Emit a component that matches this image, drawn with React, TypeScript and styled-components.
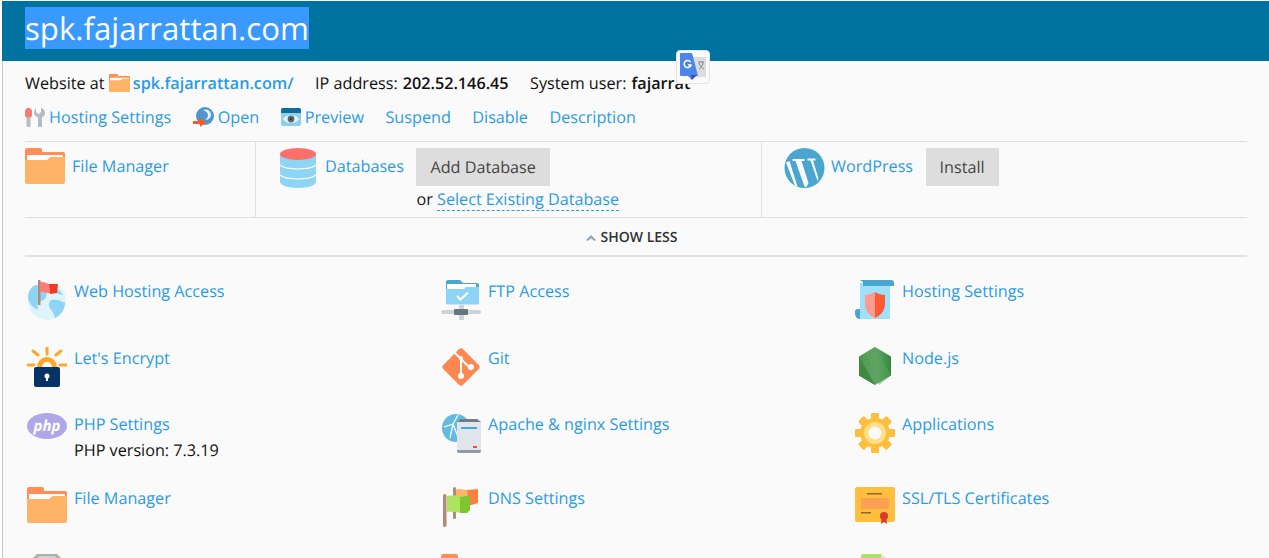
import React from "react";
import styled, { createGlobalStyle } from "styled-components";

const GlobalStyle = createGlobalStyle`
  html, body {
    margin: 0;
    height: 558px;
    overflow: hidden;
    background: #ffffff;
    font-family: "Open Sans", "Noto Sans", sans-serif;
    font-size: 16.2px;
    line-height: 22px;
    color: #111111;
    text-rendering: geometricPrecision;
  }
`;

const Page = styled.div`
  position: relative;
  margin: 1px 0 0 2px;
`;

const Header = styled.header`
  height: 60px;
  background: #0072a0;
  padding: 6px 0 0 23px;
  box-sizing: border-box;
`;

const Title = styled.h1`
  margin: 0;
  font-size: 31.2px;
  font-weight: 400;
  line-height: 40px;
  color: #ffffff;

  span {
    background: #3a99fc;
    display: inline-block;
    padding-top: 2px;
  }
`;

const Body = styled.main`
  border-left: 1px solid #c8c8c8;
  background: #fafafa;
  padding: 11px 22px 0 22px;
  height: 500px;
  overflow: hidden;
`;

const InfoBar = styled.div`
  display: flex;
  height: 22px;
  white-space: nowrap;
`;

const InfoItem = styled.div`
  display: flex;
  align-items: center;
  margin-right: 21.5px;

  b {
    font-weight: 600;
    margin-left: 5px;
  }
`;

const SiteLink = styled.a`
  color: #2a9be6;
  font-weight: 600;
  margin-left: 3px;
`;

const Actions = styled.nav`
  display: flex;
  align-items: center;
  height: 22px;
  margin-top: 12px;
  white-space: nowrap;
`;

const Action = styled.a`
  display: flex;
  align-items: center;
  gap: 4px;
  margin-right: 21.5px;
  color: #2a9be6;
`;

const Tools = styled.section`
  display: flex;
  height: 77px;
  margin-top: 13px;
  border-top: 1px solid #e0e0e0;
  border-bottom: 1px solid #e0e0e0;
  box-sizing: border-box;
`;

const ToolCell = styled.div<{ $width: number; $indent: number }>`
  display: flex;
  flex: 0 0 ${({ $width }) => $width}px;
  box-sizing: border-box;
  padding: 6px 0 0 ${({ $indent }) => $indent}px;
  border-right: 1px solid #e0e0e0;

  &:last-child {
    border-right: 0;
  }
`;

const ToolLink = styled.a<{ $gap?: number }>`
  color: #2a9be6;
  margin: 7px 0 0 ${({ $gap }) => $gap ?? 7}px;
  height: 22px;
`;

const ToolActions = styled.div`
  margin-left: 12.5px;
`;

const ToolButton = styled.div`
  display: inline-block;
  padding: 0 14px;
  height: 38px;
  line-height: 38px;
  background: #dddddd;
  color: #444444;
`;

const OrLine = styled.div`
  margin-top: 2px;
  height: 22px;
`;

const DashedLink = styled.a`
  color: #2a9be6;
  border-bottom: 1px dashed #2a9be6;
`;

const ShowLess = styled.div`
  display: flex;
  justify-content: center;
  align-items: center;
  gap: 4px;
  height: 39px;
  padding: 2px 10px 0 0;
  box-sizing: border-box;
  border-bottom: 2px solid #e3e3e3;
  font-size: 14px;
  font-weight: 600;
  color: #333333;
`;

const Chevron = styled.svg`
  width: 12px;
  height: 8px;
`;

const ServiceGrid = styled.section`
  display: grid;
  grid-template-columns: repeat(3, 414px);
  margin-top: 23px;
  padding-left: 2px;
`;

const Service = styled.div<{ $tall?: boolean }>`
  display: flex;
  gap: 7px;
  height: ${({ $tall }) => ($tall ? 74 : 66.5)}px;
`;

const IconBox = styled.div`
  flex: 0 0 40px;
  height: 40px;
  display: flex;
  justify-content: center;
`;

const ServiceText = styled.div`
  color: #111111;

  a {
    display: block;
    color: #2a9be6;
  }
`;

const ServiceNote = styled.div`
  margin-top: 4px;
`;

const TranslateBadge = styled.div`
  position: absolute;
  left: 674px;
  top: 49px;
  width: 34px;
  height: 34px;
  box-sizing: border-box;
  display: flex;
  align-items: center;
  justify-content: center;
  background: #fafafa;
  border: 1px solid #e4e4e4;
  border-radius: 4px;
`;

const Folder = ({ size = 40 }: { size?: number }) => (
  <svg width={size} height={size * 0.9} viewBox="0 0 40 36">
    <path d="M0 2a2 2 0 0 1 2-2h13a2 2 0 0 1 2 2v2h21a2 2 0 0 1 2 2v10H0z" fill="#ff8d58" />
    <path d="M2 8a1 1 0 0 1 1-1h34a1 1 0 0 1 1 1v8H2z" fill="#ffffff" />
    <path d="M0 12h21a3 3 0 0 0 3-2 3 3 0 0 1 3-1h13v25a2 2 0 0 1-2 2H2a2 2 0 0 1-2-2z" fill="#ffb366" />
  </svg>
);

const Tools2 = () => (
  <svg width="20" height="19" viewBox="0 0 20 19">
    <rect x="0" y="0" width="7" height="10" rx="3.5" fill="#f47a72" />
    <rect x="1.500" y="9" width="4" height="10" rx="1.500" fill="#b5bcc2" />
    <path d="M11 0v4l2.500 2L16 4V0c3 .5 4 3 4 5s-1.500 4-3 4.500V17.500a1.500 1.500 0 0 1-4 0V9.500C11 9 9 7 9 5s1-4.500 2-5z" fill="#b5bcc2" />
  </svg>
);

const OpenIcon = () => (
  <svg width="21" height="20" viewBox="0 0 21 20">
    <circle cx="12" cy="9" r="9" fill="#4f97c9" />
    <path d="M10 3c4-1.500 7 0 8 4 .5 3-2 6-6 6 1-1 3-2 3-5 0-2-2-4-5-5z" fill="#e6f3fa" />
    <path d="M0 14h7v-3.500l6 5-6 4.500v-3H0z" fill="#ff5a1f" />
  </svg>
);

const PreviewIcon = () => (
  <svg width="20" height="18" viewBox="0 0 20 18">
    <rect width="20" height="18" rx="2" fill="#8ed0ea" />
    <path d="M0 5V2a2 2 0 0 1 2-2h16a2 2 0 0 1 2 2v3z" fill="#0f6c9c" />
    <path d="M2 11c2-3 5-4 8-4s6 1 8 4c-2 3-5 4-8 4s-6-1-8-4z" fill="#e8f1f4" />
    <circle cx="10" cy="11" r="3.400" fill="#5a6b74" />
    <circle cx="10" cy="11" r="1.300" fill="#2f3d45" />
  </svg>
);

const DatabaseIcon = () => (
  <svg width="36" height="40" viewBox="0 0 36 40">
    <path d="M0 6h36v28c0 3-8 6-18 6S0 37 0 34z" fill="#8dd4f5" />
    <ellipse cx="18" cy="6" rx="18" ry="6" fill="#ff6f6a" />
    <path d="M0 17c3 2.500 10 4 18 4s15-1.500 18-4M0 27c3 2.500 10 4 18 4s15-1.500 18-4" fill="none" stroke="#ffffff" strokeWidth="1.200" />
  </svg>
);

const WordPressIcon = () => (
  <svg width="41" height="40" viewBox="0 0 40 40">
    <circle cx="20" cy="20" r="20" fill="#4ba6cf" />
    <path d="M1.500 14.500L5 13l8 25.500-2 .500z" fill="#fafafa" />
    <path d="M8 11h12v2h-3l7 22-2 4-2-.500L11 13H8z" fill="#fafafa" />
    <path d="M23 10.500h8v2h-2.500l5.500 18-1 2.500-7-20.500H23z" fill="#fafafa" />
  </svg>
);

const GlobeFlag = () => (
  <svg width="40" height="40" viewBox="0 0 40 40">
    <circle cx="20" cy="21" r="19" fill="#dff3fd" />
    <path d="M8 5c5 0 9 3 11 7s-1 8-5 9-4 5-3 9c-6-3-10-8-10-13 0-5 3-10 7-12zM24 20c4-1 9 0 14 3 0 6-4 12-10 15-1-5-3-7-5-10s-1-6 1-8zM26 8c4 0 8 3 10 7l-8-2z" fill="#8dd4f5" />
    <rect x="11" y="0" width="2.500" height="25" fill="#b38a76" />
    <path d="M13 2c3-1 6 2 9 2l1 9c-3 1-6-2-10-1z" fill="#ff7b76" />
    <path d="M22 4h9l-1 9-7 1z" fill="#f2391d" />
  </svg>
);

const FtpIcon = () => (
  <svg width="40" height="40" viewBox="0 0 40 40">
    <path d="M5 2a2 2 0 0 1 2-2h12l3 3h14a2 2 0 0 1 2 2v6H5z" fill="#4ba6cf" />
    <path d="M6 4h29v6H6z" fill="#ffffff" />
    <path d="M5 9h18l2-2h13v16a1.500 1.500 0 0 1-1.500 1.500h-30A1.500 1.500 0 0 1 5 23z" fill="#8dd4f5" />
    <path d="M16 16l3.500 3.500L27 12.500" fill="none" stroke="#ffffff" strokeWidth="2" />
    <rect x="18" y="25" width="5" height="15" fill="#ccd4da" />
    <rect x="0" y="30" width="40" height="4" rx="2" fill="#ccd4da" />
    <rect x="13" y="29" width="14" height="6" rx="1" fill="#66767f" />
  </svg>
);

const ShieldScroll = () => (
  <svg width="40" height="40" viewBox="0 0 40 40">
    <path d="M0 33a3 3 0 0 1 3-4h3v10H4c-2 0-4-3-4-6z" fill="#4ba6cf" />
    <path d="M5 3h30v36H5z" fill="#9fe0fd" />
    <path d="M5 0h31a3 3 0 0 1 3 3v3H8V2z" fill="#4ba6cf" />
    <path d="M10 15c3 0 7-1 10-3v26c-5-2-10-7-10-14z" fill="#ff9a8f" />
    <path d="M20 12c3 2 7 3 10 3v9c0 7-5 12-10 14z" fill="#ff5a36" />
  </svg>
);

const LockIcon = () => (
  <svg width="40" height="40" viewBox="0 0 40 40">
    <path d="M20 0v7M6 4l5 4M34 4l-5 4M0 18h7M33 18h7" stroke="#ffa726" strokeWidth="3" strokeLinecap="round" />
    <path d="M10 20a10 10 0 0 1 20 0h-5a5 5 0 0 0-10 0z" fill="#ffa726" />
    <rect x="7" y="20" width="26" height="20" rx="2" fill="#043465" />
    <circle cx="20" cy="29" r="2.500" fill="#ffffff" />
    <rect x="19" y="29" width="2" height="5" fill="#ffffff" />
  </svg>
);

const GitIcon = () => (
  <svg width="40" height="40" viewBox="0 0 40 40">
    <rect x="6" y="6" width="28" height="28" rx="3" transform="rotate(45 20 20)" fill="#ff8850" />
    <path d="M20 12v16M14 6l6 6 M20 12l10 10" stroke="#ffffff" strokeWidth="2" fill="none" />
    <circle cx="20" cy="29" r="3" fill="#ffffff" />
    <circle cx="30" cy="20" r="3" fill="#ffffff" />
    <circle cx="20" cy="11" r="2" fill="#ffffff" />
  </svg>
);

const NodeIcon = () => (
  <svg width="32" height="38" viewBox="0 0 32 38">
    <defs>
      <linearGradient id="nodeFill" x1="0" x2="1" y1="0" y2="0">
        <stop offset="0" stopColor="#4a9a48" />
        <stop offset="0.55" stopColor="#66a06c" />
        <stop offset="1" stopColor="#2f8a3c" />
      </linearGradient>
    </defs>
    <path d="M16 0l16 9.500v19L16 38 0 28.500v-19z" fill="url(#nodeFill)" />
    <path d="M16 0L6 6l14 32 12-9.500z" fill="#5aa85a" opacity="0.5" />
    <path d="M0 9.500L16 38 0 28.500z" fill="#3e8a3f" />
  </svg>
);

const PhpSvg = styled.svg`
  text {
    font-family: "Open Sans", sans-serif;
    font-size: 15px;
    font-weight: 700;
    font-style: italic;
    fill: #ffffff;
  }
`;

const PhpIcon = () => (
  <PhpSvg viewBox="0 0 40 26" width="40" height="26">
    <ellipse cx="20" cy="13" rx="20" ry="13" fill="#b0a7e8" />
    <text x="20" y="18" textAnchor="middle">
      php
    </text>
  </PhpSvg>
);

const ApacheIcon = () => (
  <svg width="40" height="40" viewBox="0 0 40 40">
    <circle cx="15" cy="15" r="14" fill="#62bce2" />
    <path d="M3 14l9-3 5-9M12 11l5 13M12 11l-3 14" stroke="#ffffff" strokeWidth="1.200" fill="none" />
    <path d="M16 9l3-3h17l4 3v29a2 2 0 0 1-2 2H18a2 2 0 0 1-2-2z" fill="#dfe5ea" />
    <path d="M16 9l3-3h17l4 3z" fill="#717d85" />
    <path d="M16 37h24v1a2 2 0 0 1-2 2H18a2 2 0 0 1-2-2z" fill="#8f9aa2" />
    <rect x="20" y="14" width="16" height="2" fill="#4ba6cf" />
    <rect x="32" y="33" width="4" height="2" fill="#ff4a2f" />
  </svg>
);

const DnsIcon = () => (
  <svg width="36" height="40" viewBox="0 0 36 40">
    <path d="M12 3c4-2 8 0 12 0v14c-4 1-6 0-11-1z" fill="#ffb366" />
    <path d="M24 3l11-1v14l-10 3z" fill="#ff7f3f" />
    <rect x="10" y="0" width="3" height="32" rx="1.500" fill="#b38a76" />
    <rect x="0" y="7" width="3.500" height="33" rx="1.700" fill="#b38a76" />
    <path d="M4 9c4-1 8-1 12 0l7 1v16c-6 0-12-2-19-1z" fill="#aee35f" />
    <path d="M17 10l7-1 3-1v15l-3 3h-7z" fill="#7cc62f" />
  </svg>
);

const GearIcon = () => (
  <svg width="40" height="40" viewBox="0 0 40 40">
    {[0, 45, 90, 135, 180, 225, 270, 315].map((deg) => (
      <rect key={deg} x="16" y="0" width="8" height="40" rx="1.500" fill="#ffbe3c" transform={`rotate(${deg} 20 20)`} />
    ))}
    <circle cx="20" cy="20" r="15" fill="#ffbe3c" />
    <circle cx="20" cy="20" r="11" fill="#ffdf8a" />
    <circle cx="20" cy="20" r="6.500" fill="#fafafa" />
  </svg>
);

const CertIcon = () => (
  <svg width="40" height="38" viewBox="0 0 40 38">
    <rect width="40" height="35" rx="2" fill="#ffbe3c" />
    <rect x="6" y="11" width="28" height="11" fill="#ff9f55" />
    <rect x="12" y="6" width="15" height="1.500" fill="#8a6a30" />
    <rect x="6" y="25" width="10" height="1.500" fill="#8a6a30" />
    <path d="M27 30l-1 7 3-2 3 2-1-7z" fill="#d93a2b" />
    <circle cx="29" cy="29" r="4" fill="#d93a2b" />
  </svg>
);

const BoxIcon = () => (
  <svg width="40" height="40" viewBox="0 0 40 40">
    <path d="M10 0h20l8 8v32H2V8z" fill="#aab2b8" />
    <path d="M12 2h16l5 6H7z" fill="#ccd2d6" />
  </svg>
);

const FileIcon = () => (
  <svg width="40" height="40" viewBox="0 0 40 40">
    <path d="M6 2a2 2 0 0 1 2-2h18l8 8v32H6z" fill="#aee35f" />
    <path d="M26 0l8 8h-8z" fill="#d4f2a4" />
  </svg>
);

const services = [
  { icon: <GlobeFlag />, label: "Web Hosting Access" },
  { icon: <FtpIcon />, label: "FTP Access" },
  { icon: <ShieldScroll />, label: "Hosting Settings" },
  { icon: <LockIcon />, label: "Let's Encrypt" },
  { icon: <GitIcon />, label: "Git" },
  { icon: <NodeIcon />, label: "Node.js" },
  { icon: <PhpIcon />, label: "PHP Settings", note: "PHP version: 7.3.19", tall: true },
  { icon: <ApacheIcon />, label: "Apache & nginx Settings", tall: true },
  { icon: <GearIcon />, label: "Applications", tall: true },
  { icon: <Folder />, label: "File Manager" },
  { icon: <DnsIcon />, label: "DNS Settings" },
  { icon: <CertIcon />, label: "SSL/TLS Certificates" },
  { icon: <BoxIcon />, label: "" },
  { icon: <Folder />, label: "" },
  { icon: <FileIcon />, label: "" },
];

const App: React.FC = () => {
  return (
    <Page>
      <GlobalStyle />
      <Header>
        <Title>
          <span>spk.fajarrattan.com</span>
        </Title>
      </Header>
      <Body>
        <InfoBar>
          <InfoItem>
            Website at&nbsp;
            <Folder size={21} />
            <SiteLink>spk.fajarrattan.com/</SiteLink>
          </InfoItem>
          <InfoItem>
            IP address:<b>202.52.146.45</b>
          </InfoItem>
          <InfoItem>
            System user:<b>fajarrat</b>
          </InfoItem>
        </InfoBar>
        <Actions>
          <Action>
            <Tools2 />
            Hosting Settings
          </Action>
          <Action>
            <OpenIcon />
            Open
          </Action>
          <Action>
            <PreviewIcon />
            Preview
          </Action>
          <Action>Suspend</Action>
          <Action>Disable</Action>
          <Action>Description</Action>
        </Actions>
        <Tools>
          <ToolCell $width={231} $indent={0}>
            <Folder />
            <ToolLink>File Manager</ToolLink>
          </ToolCell>
          <ToolCell $width={506} $indent={24}>
            <DatabaseIcon />
            <ToolLink $gap={9}>Databases</ToolLink>
            <ToolActions>
              <ToolButton>Add Database</ToolButton>
              <OrLine>
                or <DashedLink>Select Existing Database</DashedLink>
              </OrLine>
            </ToolActions>
          </ToolCell>
          <ToolCell $width={485} $indent={22}>
            <WordPressIcon />
            <ToolLink $gap={6}>WordPress</ToolLink>
            <ToolActions>
              <ToolButton>Install</ToolButton>
            </ToolActions>
          </ToolCell>
        </Tools>
        <ShowLess>
          <Chevron viewBox="0 0 12 8">
            <path d="M6 1l5 5-1.500 1L6 4.500 2.500 7 1 6z" fill="#9aa7b2" />
          </Chevron>
          SHOW LESS
        </ShowLess>
        <ServiceGrid>
          {services.map((item, i) => (
            <Service key={i} $tall={item.tall}>
              <IconBox>{item.icon}</IconBox>
              <ServiceText>
                <a>{item.label}</a>
                {item.note && <ServiceNote>{item.note}</ServiceNote>}
              </ServiceText>
            </Service>
          ))}
        </ServiceGrid>
      </Body>
      <TranslateBadge>
        <svg width="26" height="28" viewBox="0 0 26 28">
          <rect x="8" y="4" width="18" height="20" rx="1" fill="#dcdcdc" />
          <path d="M18 9h6M21 8v1M19 16c3-2 4-4 4-7M19 10c1 3 3 5 5 6" stroke="#7d8a90" strokeWidth="1" fill="none" />
          <path d="M1 0h11l6 23H12v4l-4-4H1a1 1 0 0 1-1-1V1a1 1 0 0 1 1-1z" fill="#4d86ea" />
          <path d="M11 22h6l-5 5z" fill="#3a50b8" />
          <path d="M10.500 9a3.500 3.500 0 1 0 .5 3H8" fill="none" stroke="#ffffff" strokeWidth="1.500" />
        </svg>
      </TranslateBadge>
    </Page>
  );
};

export default App;
